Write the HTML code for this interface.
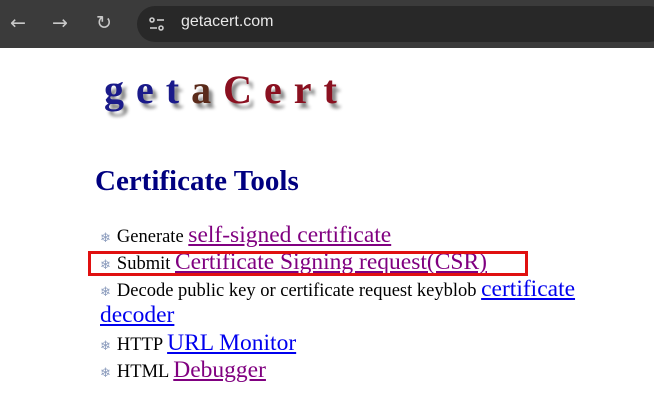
<html><head><style>
body{margin:0;width:654px;height:413px;overflow:hidden;background:#fff;font-family:"Liberation Serif",serif}
.bar{height:48px;background:#3b3b3b;position:relative}
.pill{position:absolute;left:137px;top:6px;width:530px;height:36px;border-radius:18px;background:#282828}
.url{position:absolute;left:181px;top:13px;color:#e8e8e8;font:16px "Liberation Sans",sans-serif}
.ic{position:absolute;top:12px;color:#c8c8c8;font:19px "DejaVu Sans",sans-serif}
.logo{position:absolute;left:104px;top:66px;font:bold 40px "Liberation Serif",serif;letter-spacing:12px;text-shadow:4px 5px 3px #888}
h1{position:absolute;left:95px;top:165px;margin:0;font:bold 29px "Liberation Serif",serif;color:#000080}
.list{position:absolute;left:100px;top:224px;width:495px;font-size:18.5px;line-height:27px}
.list div{line-height:27px;height:27px}
.list div.two{height:54px}
.b{color:#8899bb;font-size:13px;margin-right:6px;line-height:10px}
a{font-size:23.5px;color:#800080;line-height:20px}
a.u{color:#0000ee}
.box{position:absolute;left:88px;top:251px;width:434px;height:19px;border:3px solid #e01010}
</style></head><body>
<div class="bar">
<span class="ic" style="left:10px">←</span><span class="ic" style="left:52px">→</span><span class="ic" style="left:96px">↻</span>
<div class="pill"></div>
<svg style="position:absolute;left:148px;top:15px" width="18" height="18" fill="none" stroke="#ccc" stroke-width="1.6"><circle cx="4" cy="5" r="2"/><line x1="9" y1="5" x2="16" y2="5"/><line x1="2" y1="13" x2="9" y2="13"/><circle cx="13" cy="13" r="2"/></svg>
<span class="url">getacert.com</span>
</div>
<div class="logo"><span style="color:#1a1a8a">g</span><span style="color:#1a1a8a">e</span><span style="color:#1a1a8a">t</span><span style="color:#5a2a1a">a</span><span style="color:#8a1020">C</span><span style="color:#8a1020">e</span><span style="color:#8a1020">r</span><span style="color:#8a1020">t</span></div>
<h1>Certificate Tools</h1>
<div class="list">
<div><span class="b">❄</span>Generate <a href="#">self-signed certificate</a></div>
<div><span class="b">❄</span>Submit <a href="#">Certificate Signing request(CSR)</a></div>
<div class="two"><span class="b">❄</span>Decode public key or certificate request keyblob <a class="u" href="#">certificate decoder</a></div>
<div><span class="b">❄</span>HTTP <a class="u" href="#">URL Monitor</a></div>
<div><span class="b">❄</span>HTML <a href="#">Debugger</a></div>
</div>
<div class="box"></div>
</body></html>
